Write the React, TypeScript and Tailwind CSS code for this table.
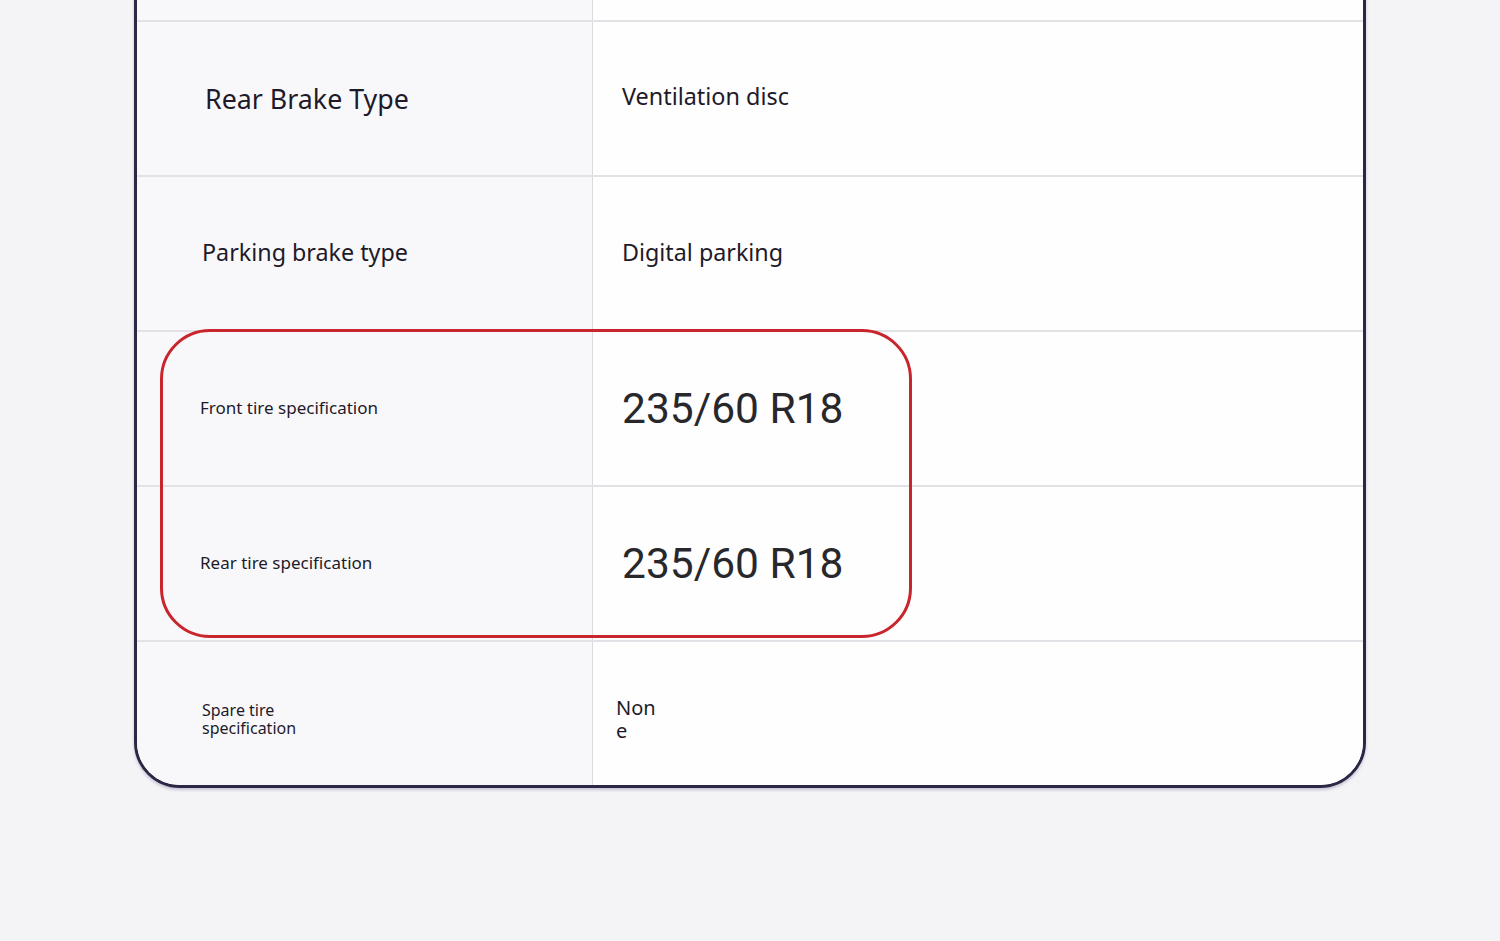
const rows = [
  { label: "", value: "", labelCls: "", valueCls: "" },
  {
    label: "Rear Brake Type",
    value: "Ventilation disc",
    labelCls: "pl-[68px] text-[26.8px] pt-[2px]",
    valueCls: "pl-[29px] text-[23.4px] pb-[3px]",
  },
  {
    label: "Parking brake type",
    value: "Digital parking",
    labelCls: "pl-[65px] text-[23.3px] pb-[2px]",
    valueCls: "pl-[29px] text-[23.3px] pb-[2px]",
  },
  {
    label: "Front tire specification",
    value: "235/60 R18",
    labelCls: "pl-[63px] text-[17px] pb-[2px]",
    valueCls: "pl-[29px] text-[42.5px] font-['Roboto'] text-[#28282c]",
  },
  {
    label: "Rear tire specification",
    value: "235/60 R18",
    labelCls: "pl-[63px] text-[17px] pb-[2px]",
    valueCls: "pl-[29px] text-[42.5px] font-['Roboto'] text-[#28282c]",
  },
];

export default function App() {
  return (
    <div className="h-[941px] w-[1500px] overflow-hidden bg-[#f4f3f6] font-['Noto_Sans',sans-serif] text-[#1e1a29]">
      <div className="relative ml-[134px] mt-[-138px] w-[1232px] rounded-b-[46px] border-[3px] border-[#2b2846] bg-white shadow-[0_2px_3px_rgba(60,50,110,0.25)]">
        {rows.map((r, i) => (
          <div
            key={i}
            className={
              "grid h-[155px] grid-cols-[456px_1fr] " +
              (i > 0 ? "border-t-2 border-[#e2e2e6]" : "")
            }
          >
            <div className={"flex items-center border-r border-[#d9d9de] bg-[#f8f8fb] " + r.labelCls}>
              {r.label}
            </div>
            <div className={"flex items-center bg-[#fefefe] " + r.valueCls}>{r.value}</div>
          </div>
        ))}

        {/* Spare tire */}
        <div className="grid h-[145px] grid-cols-[456px_1fr] overflow-hidden rounded-b-[43px] border-t-2 border-[#e2e2e6]">
          <div className="flex items-center border-r border-[#d9d9de] bg-[#f8f8fb] pl-[65px] pt-[10px] text-[16px] leading-[18px]">
            <div>
              Spare tire
              <br />
              specification
            </div>
          </div>
          <div className="flex items-center bg-[#fefefe] pl-[23px] pt-[10px] text-[20px] leading-[23px]">
            <div>
              Non
              <br />e
            </div>
          </div>
        </div>

        {/* highlight */}
        <div className="pointer-events-none absolute left-[23px] top-[464px] h-[309px] w-[752px] rounded-[50px] border-[3px] border-[#c9252c]" />
      </div>
    </div>
  );
}
